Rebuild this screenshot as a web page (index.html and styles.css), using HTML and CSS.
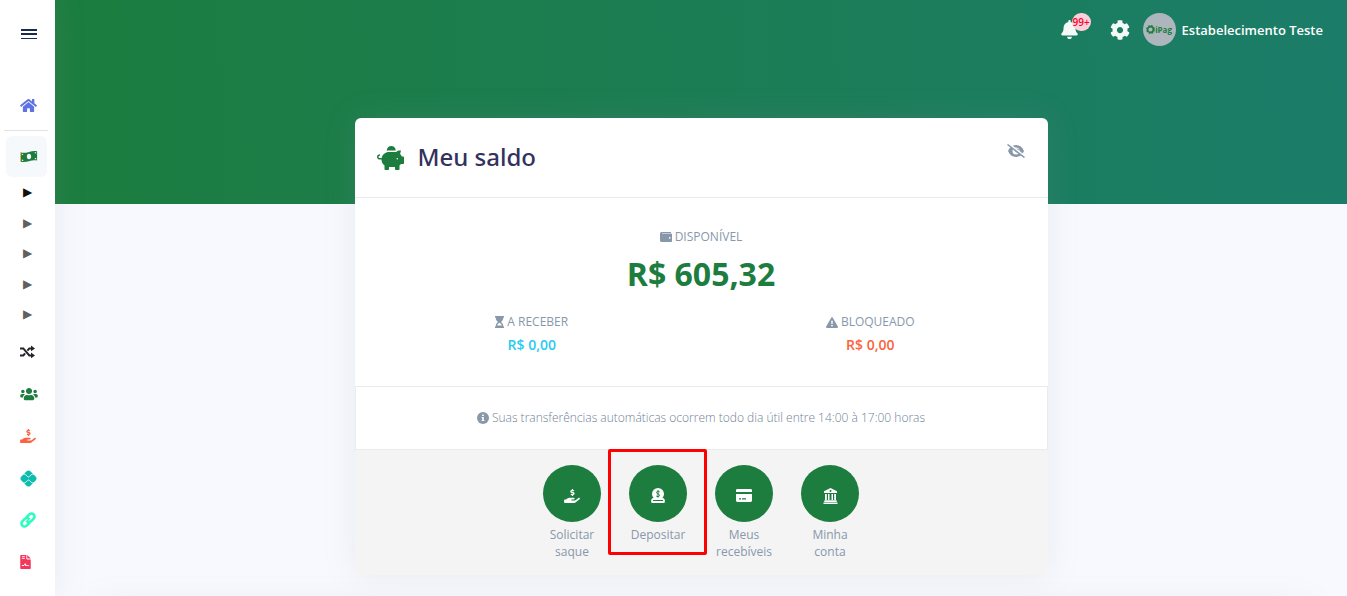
FILE: index.html
```html
<!DOCTYPE html>
<html lang="pt-BR">

<head>
    <meta charset="UTF-8">
    <meta name="viewport" content="width=device-width, initial-scale=1.0">
    <title>Meu saldo</title>
    <link rel="stylesheet" href="styles.css">
</head>

<body>
    <!-- Sidebar -->
    <aside class="sidebar">
        <button class="menu-toggle" type="button" aria-label="Menu">
            <span class="menu-line"></span>
            <span class="menu-line"></span>
            <span class="menu-line menu-line-thin"></span>
        </button>
        <nav class="side-nav">
            <a href="#" class="side-link text-indigo" aria-label="Início">
                <svg width="17" height="15" viewBox="0 0 576 512"><path d="M280.37 148.26L96 300.11V464a16 16 0 0 0 16 16l112.06-.29a16 16 0 0 0 15.92-16V368a16 16 0 0 1 16-16h64a16 16 0 0 1 16 16v95.64a16 16 0 0 0 16 16.05L464 480a16 16 0 0 0 16-16V300L295.67 148.26a12.19 12.19 0 0 0-15.3 0zM571.6 251.47L488 182.56V44.05a12 12 0 0 0-12-12h-56a12 12 0 0 0-12 12v72.61L318.47 43a48 48 0 0 0-61 0L4.34 251.47a12 12 0 0 0-1.6 16.9l25.5 31A12 12 0 0 0 45.15 301l235.22-193.74a12.19 12.19 0 0 1 15.3 0L530.9 301a12 12 0 0 0 16.9-1.6l25.5-31a12 12 0 0 0-1.7-16.93z"/></svg>
            </a>
            <hr class="side-divider">
            <a href="#" class="side-link side-link-active text-green" aria-label="Saldo">
                <svg width="18" height="13" viewBox="0 0 20 14"><path fill-rule="evenodd" d="M1 2.600C4 3.400 7 2.700 10 1.900S16 .6 19 1.300v10.200c-3-.8-6-.1-9 .7s-6 1.300-9 .6zM10 3.900c-1.500 0-2.400 1.400-2.400 3.100s.9 3.100 2.400 3.100 2.400-1.400 2.400-3.100S11.500 3.900 10 3.900zM2 4v1.500c.9 0 1.600-.6 1.700-1.300zm0 7.800c.6.2 1.200.2 1.800.1-.1-.8-.8-1.500-1.800-1.500zM18 2.300c-.6-.1-1.200-.2-1.800-.1.1.8.8 1.400 1.800 1.500zm0 6.200c-1 .1-1.700.8-1.700 1.600.6 0 1.100 0 1.700.1z"/><path fill="#f0a63c" d="M.2 2.400h.9v10.500H.2z"/></svg>
            </a>
            <div class="side-sub">
                <a href="#" class="side-arrow side-arrow-active">&#9654;</a>
                <a href="#" class="side-arrow">&#9654;</a>
                <a href="#" class="side-arrow">&#9654;</a>
                <a href="#" class="side-arrow">&#9654;</a>
                <a href="#" class="side-arrow">&#9654;</a>
            </div>
            <a href="#" class="side-link text-dark" aria-label="Transferências">
                <svg width="15" height="14" viewBox="0 0 15 14"><path d="M0 3.400h3.300l6 7h2.200M0 10.400h3.300l1.800-2.100M7.400 5.600l1.900-2.200h2.200" fill="none" stroke="currentColor" stroke-width="2"/><path d="M11 .6l4 2.800-4 2.800zM11 7.600l4 2.800-4 2.800z"/></svg>
            </a>
            <a href="#" class="side-link text-green" aria-label="Clientes">
                <svg width="18" height="14" viewBox="0 0 640 512"><path d="M96 224c35.300 0 64-28.700 64-64s-28.700-64-64-64-64 28.700-64 64 28.700 64 64 64zm448 0c35.300 0 64-28.700 64-64s-28.700-64-64-64-64 28.700-64 64 28.700 64 64 64zm32 32h-64c-17.600 0-33.500 7.100-45.100 18.600 40.300 22.100 68.900 62 75.100 109.400h66c17.700 0 32-14.300 32-32v-32c0-35.300-28.700-64-64-64zm-256 0c61.900 0 112-50.100 112-112S381.900 32 320 32 208 82.100 208 144s50.100 112 112 112zm76.800 32h-8.300c-20.800 10-43.900 16-68.500 16s-47.600-6-68.500-16h-8.300C179.600 288 128 339.600 128 403.200V432c0 26.500 21.500 48 48 48h288c26.500 0 48-21.500 48-48v-28.800c0-63.600-51.600-115.200-115.200-115.200zm-223.700-13.400C161.500 263.100 145.600 256 128 256H64c-35.300 0-64 28.700-64 64v32c0 17.700 14.300 32 32 32h65.900c6.300-47.400 34.900-87.300 75.200-109.400z"/></svg>
            </a>
            <a href="#" class="side-link text-orange" aria-label="Saques">
                <svg width="16" height="14" viewBox="0 0 576 512"><path id="hand-usd" d="M271.06,144.3l54.27,14.3a8.59,8.59,0,0,1,6.63,8.1c0,4.6-4.09,8.4-9.12,8.4h-35.6a30,30,0,0,1-11.19-2.2c-5.24-2.2-11.28-1.7-15.3,2l-19,17.5a11.68,11.68,0,0,0-2.25,2.66,11.42,11.42,0,0,0,3.88,15.74,83.77,83.77,0,0,0,34.51,11.5V240c0,8.8,7.83,16,17.37,16h17.37c9.55,0,17.38-7.2,17.38-16V222.4c32.93-3.6,57.84-31,53.5-63-3.15-23-22.46-41.3-46.56-47.7L282.68,97.4a8.59,8.59,0,0,1-6.63-8.1c0-4.6,4.09-8.4,9.12-8.4h35.6A30,30,0,0,1,332,83.1c5.23,2.2,11.28,1.7,15.3-2l19-17.5A11.31,11.31,0,0,0,368.47,61a11.43,11.43,0,0,0-3.84-15.78,83.82,83.82,0,0,0-34.52-11.5V16c0-8.8-7.82-16-17.37-16H295.37C285.82,0,278,7.2,278,16V33.6c-32.89,3.6-57.85,31-53.51,63C227.63,119.6,247,137.9,271.06,144.3ZM565.27,328.1c-11.8-10.7-30.2-10-42.6,0L430.27,402a63.64,63.64,0,0,1-40,14H272a16,16,0,0,1,0-32h78.29c15.9,0,30.71-10.9,33.25-26.6a31.2,31.2,0,0,0,.46-5.46A32,32,0,0,0,352,320H192a117.66,117.66,0,0,0-74.1,26.29L71.4,384H16A16,16,0,0,0,0,400v96a16,16,0,0,0,16,16H372.77a64,64,0,0,0,40-14L564,377a32,32,0,0,0,1.28-48.9Z"/></svg>
            </a>
            <a href="#" class="side-link text-teal" aria-label="Pix">
                <svg width="17" height="17" viewBox="0 0 16 16"><rect x="2" y="2" width="12" height="12" rx="2.500" transform="rotate(45 8 8)"/><path d="M2.500 3.800h1.300c.8 0 1.300.3 1.800.8l1.700 1.700c.4.400 1 .4 1.400 0l1.700-1.700c.5-.5 1-.8 1.800-.8h1.300M2.500 12.200h1.300c.8 0 1.300-.3 1.800-.8l1.700-1.700c.4-.4 1-.4 1.400 0l1.700 1.700c.5.5 1 .8 1.800.8h1.300" fill="none" stroke="#fff" stroke-width=".8"/></svg>
            </a>
            <a href="#" class="side-link text-mint" aria-label="Links">
                <svg width="16" height="16" viewBox="0 0 16 16"><g fill="none" stroke="currentColor" stroke-width="2.600" transform="rotate(-45 8 8)"><path d="M7.500 11H3a3 3 0 0 1 0-6h3.500a3 3 0 0 1 2.900 3.700"/><path d="M8.500 5H13a3 3 0 0 1 0 6H9.500a3 3 0 0 1-2.900-3.700"/></g></svg>
            </a>
            <a href="#" class="side-link text-red" aria-label="Contratos">
                <svg width="11" height="14" viewBox="0 0 384 512"><path fill-rule="evenodd" d="M0 24C0 10 10 0 24 0h200v136c0 13 11 24 24 24h136v328c0 14-10 24-24 24H24c-14 0-24-10-24-24zM60 50v34h110V50zm0 66v34h110v-34zM60 400h70l30-45 35 50h130v-34h-95l-50-75-50 70H60zM256 0l128 128H256z"/></svg>
            </a>
        </nav>
    </aside>
    <!-- End of Sidebar -->

    <main class="main">
        <header class="hero">
            <div class="topbar">
                <button class="icon-button" type="button" aria-label="Notificações">
                    <svg width="17" height="19" viewBox="0 0 448 512"><path d="M224 512c35.320 0 63.970-28.650 63.970-64H160.030c0 35.350 28.650 64 63.970 64zm215.390-149.710c-19.320-20.760-55.470-51.990-55.470-154.290 0-77.700-54.480-139.900-127.940-155.160V32c0-17.670-14.320-32-31.980-32s-31.980 14.330-31.980 32v20.840C118.560 68.100 64.080 130.300 64.080 208c0 102.300-36.150 133.530-55.470 154.290-6 6.450-8.660 14.160-8.610 21.710.110 16.400 12.980 32 32.100 32h383.800c19.120 0 32-15.600 32.100-32 .050-7.550-2.610-15.270-8.610-21.710z"/></svg>
                    <span class="badge">99+</span>
                </button>
                <button class="icon-button" type="button" aria-label="Configurações">
                    <svg width="20" height="20" viewBox="0 0 512 512"><path d="M487.400 315.700l-42.600-24.600c4.300-23.200 4.300-47 0-70.200l42.600-24.600c4.900-2.800 7.100-8.600 5.500-14-11.100-35.600-30-67.800-54.700-94.600-3.800-4.100-10-5.100-14.800-2.300L380.800 110c-17.900-15.400-38.500-27.300-60.800-35.100V25.800c0-5.600-3.900-10.500-9.400-11.700-36.700-8.200-74.300-7.800-109.200 0-5.500 1.200-9.400 6.100-9.400 11.700V75c-22.200 7.900-42.800 19.800-60.800 35.100L88.700 85.500c-4.900-2.800-11-1.900-14.800 2.300-24.700 26.700-43.600 58.900-54.700 94.600-1.700 5.400.6 11.200 5.500 14L67.300 221c-4.300 23.200-4.300 47 0 70.200l-42.600 24.600c-4.900 2.800-7.100 8.600-5.500 14 11.100 35.600 30 67.800 54.700 94.600 3.800 4.100 10 5.100 14.800 2.300l42.600-24.600c17.900 15.400 38.500 27.300 60.800 35.100v49.200c0 5.600 3.900 10.500 9.400 11.700 36.700 8.200 74.300 7.800 109.200 0 5.500-1.200 9.400-6.100 9.400-11.700v-49.200c22.200-7.900 42.800-19.800 60.800-35.100l42.600 24.600c4.900 2.800 11 1.900 14.800-2.300 24.700-26.700 43.600-58.900 54.700-94.600 1.500-5.500-.7-11.300-5.600-14.100zM256 336c-44.100 0-80-35.900-80-80s35.900-80 80-80 80 35.900 80 80-35.900 80-80 80z"/></svg>
                </button>
                <a href="#" class="profile">
                    <span class="avatar">
                        <svg width="9" height="9" viewBox="0 0 10 10"><circle cx="5" cy="5" r="3.200" fill="none" stroke="currentColor" stroke-width="1.800"/><circle cx="5" cy="5" r="4.200" fill="none" stroke="currentColor" stroke-width="1.400" stroke-dasharray="2 1.300"/></svg>
                        iPag
                    </span>
                    <span class="profile-name">Estabelecimento Teste</span>
                </a>
            </div>
        </header>

        <!-- Balance card -->
        <section class="card">
            <div class="card-header">
                <svg class="text-green" width="27" height="24" viewBox="0 0 576 512"><path d="M560 224h-29.500c-8.800-20-21.600-37.700-37.400-52.500L512 96h-32c-29.400 0-55.400 13.500-73 34.300-7.600-1.100-15.100-2.300-23-2.300H256c-77.400 0-141.900 55-156.800 128H56c-14.800 0-26.500-13.500-23.500-28.800C34.700 215.800 45.400 208 57 208h1c3.300 0 6-2.700 6-6v-20c0-3.300-2.700-6-6-6-28.500 0-53.900 20.400-57.500 48.600C-3.900 258.800 22.700 288 56 288h40c0 52.200 25.400 98.100 64 127.300V496c0 8.800 7.200 16 16 16h64c8.800 0 16-7.200 16-16v-48h128v48c0 8.800 7.200 16 16 16h64c8.800 0 16-7.200 16-16v-80.700c11.800-8.900 22.300-19.400 31.300-31.300H560c8.800 0 16-7.200 16-16V240c0-8.800-7.200-16-16-16zm-128 64c-8.800 0-16-7.200-16-16s7.200-16 16-16 16 7.200 16 16-7.200 16-16 16zM256 96h128c5.400 0 10.700.4 15.900.8 0-.3.1-.5.1-.8 0-53-43-96-96-96s-96 43-96 96c0 2.100.5 4.100.6 6.200 15.200-3.900 31-6.200 47.400-6.200z"/></svg>
                <h1 class="card-title">Meu saldo</h1>
                <button class="eye-button" type="button" aria-label="Ocultar saldo">
                    <svg width="18" height="14" viewBox="0 0 18 14"><path fill-rule="evenodd" d="M9 1c3.700 0 6.500 2.200 8 6-1.500 3.800-4.300 6-8 6s-6.500-2.200-8-6c1.500-3.800 4.300-6 8-6zm0 2.500a3.500 3.500 0 1 0 0 7 3.500 3.500 0 0 0 0-7z"/><circle cx="10" cy="6.500" r="2"/><path d="M1.500 0l16 12.500" stroke="#fff" stroke-width="2.500"/><path d="M.5.500l17 13" stroke="currentColor" stroke-width="1.500"/></svg>
                </button>
            </div>

            <div class="card-body">
                <div class="balance">
                    <div class="label">
                        <svg width="12" height="12" viewBox="0 0 12 12"><path fill-rule="evenodd" d="M1.500 1H11v1H2v.5h9.200c.5 0 .8.4.8.8v6.900c0 .5-.4.800-.8.800H1.500A1.500 1.500 0 0 1 0 9.500v-7A1.500 1.500 0 0 1 1.500 1zM9.700 5.900a.9.900 0 1 0 0 1.800.9.900 0 0 0 0-1.800z"/></svg>
                        DISPONÍVEL
                    </div>
                    <div class="amount amount-large">R$ 605,32</div>
                </div>
                <div class="balance-row">
                    <div class="balance">
                        <div class="label">
                            <svg width="9" height="12" viewBox="0 0 9 12"><path fill-rule="evenodd" d="M0 0h9v1.500h-.7c0 2-1 3.600-2.400 4.500 1.400.9 2.400 2.500 2.400 4.500H9V12H0v-1.500h.7C.7 8.500 1.700 6.900 3.100 6 1.700 5.100.7 3.500.7 1.500H0zm2.200 9.500h4.600C6.400 8 5.500 7.100 4.500 7.100S2.600 8 2.200 9.500z"/></svg>
                            A RECEBER
                        </div>
                        <div class="amount text-cyan">R$ 0,00</div>
                    </div>
                    <div class="balance">
                        <div class="label">
                            <svg width="12" height="11" viewBox="0 0 12 11"><path fill-rule="evenodd" d="M6 .3c.3 0 .6.100.8.500l5 8.700c.4.700-.1 1.500-.9 1.500H1.100c-.8 0-1.300-.8-.9-1.500l5-8.700C5.400.4 5.700.3 6 .3zM5.200 3.800l.2 3.200h1.200l.2-3.200zM6 7.700a.9.900 0 1 0 0 1.800.9.900 0 0 0 0-1.800z"/></svg>
                            BLOQUEADO
                        </div>
                        <div class="amount text-orange">R$ 0,00</div>
                    </div>
                </div>
            </div>

            <div class="card-notice">
                <svg width="12" height="12" viewBox="0 0 12 12"><circle cx="6" cy="6" r="6"/><path fill="#fff" d="M5.100 2.400h1.700v1.500H5.100zM4.600 4.900h2.200v3.200h.6v1H4.600v-1h.6V5.900h-.6z"/></svg>
                <span class="notice-text">Suas transferências automáticas ocorrem todo dia útil entre 14:00 à 17:00 horas</span>
            </div>

            <div class="card-footer">
                <a href="#" class="action">
                    <span class="action-circle">
                        <svg width="16" height="14" viewBox="0 0 576 512"><use href="#hand-usd"/></svg>
                    </span>
                    Solicitar saque
                </a>
                <a href="#" class="action action-highlight">
                    <span class="action-circle">
                        <svg width="14" height="15" viewBox="0 0 14 15"><circle cx="7" cy="6" r="6"/><path d="M1.700 10h10.600l1.500 1.800V14a1 1 0 0 1-1 1H1.200a1 1 0 0 1-1-1v-2.200z"/><path d="M2 12.500h10" stroke="#1c7d3f" stroke-width="1"/><path d="M8.700 3.900C8.200 3.500 7.600 3.300 7 3.300c-2 0-2 2.300 0 2.600s2.200 2.700 0 2.700c-.7 0-1.300-.2-1.800-.6M7 2.200v7.400" fill="none" stroke="#1c7d3f" stroke-width="1"/></svg>
                    </span>
                    Depositar
                </a>
                <a href="#" class="action">
                    <span class="action-circle">
                        <svg width="16" height="13" viewBox="0 0 16 13"><path fill-rule="evenodd" d="M0 3V1.400C0 .6.600 0 1.400 0h13.200c.8 0 1.400.6 1.400 1.400V3zM0 5h16v6.600c0 .8-.6 1.400-1.400 1.400H1.400C.6 13 0 12.400 0 11.600zm3 4.200v1.200h2V9.200zm3 0v1.200h4V9.200z"/></svg>
                    </span>
                    Meus recebíveis
                </a>
                <a href="#" class="action">
                    <span class="action-circle">
                        <svg width="15" height="16" viewBox="0 0 15 16"><path fill-rule="evenodd" d="M7.500 0L14 3.200V5H1V3.200zM7.500 2a1 1 0 1 0 0 2 1 1 0 0 0 0-2zM2 6h1.800v6.500H2zM5 6h1.500v6.500H5zM8.500 6H10v6.500H8.500zM11.200 6H13v6.500h-1.800zM1.300 12.300h12.400V14H1.300zM.5 14.500h14V16H.5z"/></svg>
                    </span>
                    Minha conta
                </a>
            </div>
        </section>
        <!-- End of Balance card -->

        <section class="panel"></section>
    </main>
</body>

</html>
```
FILE: styles.css
```css
* {
    box-sizing: border-box;
}

body {
    margin: 0;
    display: flex;
    height: 100vh;
    overflow: hidden;
    background-color: #f8f9fe;
    color: #8898aa;
    font-family: 'Open Sans', sans-serif;
    font-size: 12px;
    line-height: 18px;
}

a {
    color: inherit;
    text-decoration: none;
}

button {
    padding: 0;
    border: 0;
    background: none;
    color: inherit;
    font: inherit;
    cursor: pointer;
}

svg {
    display: block;
    flex: none;
    fill: currentColor;
}

.text-indigo {
    color: #5e72e4;
}

.text-green {
    color: #1c7d3f;
}

.text-dark {
    color: #212529;
}

.text-orange {
    color: #fb6340;
}

.text-teal {
    color: #0cbcaf;
}

.text-mint {
    color: #2dfbc0;
}

.text-red {
    color: #f5365c;
}

.text-cyan {
    color: #2bcbf0;
}

/* Sidebar */
.sidebar {
    flex: none;
    width: 55px;
    padding: 0 4px;
    background-color: #fff;
    box-shadow: 0 0 32px rgba(136, 152, 170, .15);
    z-index: 1;
}

.menu-toggle {
    display: flex;
    flex-direction: column;
    gap: 2px;
    margin: 28px auto 45px;
    padding: 1px 0 0 2px;
}

.menu-line {
    width: 16px;
    height: 2px;
    background-color: #172b4d;
}

.menu-line-thin {
    height: 1px;
    margin-top: 1px;
}

.side-nav {
    display: flex;
    flex-direction: column;
}

.side-link {
    display: flex;
    align-items: center;
    height: 42px;
    padding-left: 16px;
}

.side-link-active {
    width: 41px;
    height: 41px;
    margin: 0 2px;
    padding-left: 14px;
    border-radius: 6px;
    background-color: #f6f9fc;
}

.side-divider {
    width: 44px;
    height: 1px;
    margin: 4px 0 5px;
    border: 0;
    background-color: #e3e3e3;
}

.side-sub {
    display: flex;
    flex-direction: column;
    justify-content: space-between;
    height: 152px;
    margin-bottom: 2px;
}

.side-arrow {
    height: 30px;
    color: #606060;
    font-family: 'DejaVu Sans', sans-serif;
    font-size: 12px;
    line-height: 30px;
    text-align: center;
}

.side-arrow-active {
    color: #111;
}

/* Main area */
.main {
    flex: 1;
    min-width: 0;
    overflow: hidden;
}

.hero {
    height: 204px;
    background: linear-gradient(87deg, #1c7d3f 0%, #1b7d69 100%);
}

.topbar {
    display: flex;
    align-items: center;
    justify-content: flex-end;
    padding: 13px 24px 0;
}

.icon-button {
    position: relative;
    margin-right: 24px;
    color: #f4faf8;
}

.icon-button + .icon-button {
    margin: 0 13px 0 8px;
}

.badge {
    position: absolute;
    top: -7px;
    left: 11px;
    width: 19px;
    height: 18px;
    border-radius: 9px;
    background-color: #fdd1da;
    color: #f80031;
    font-size: 10px;
    font-weight: 600;
    line-height: 18px;
    text-align: center;
}

.profile {
    display: flex;
    align-items: center;
    gap: 6px;
    color: #fff;
}

.avatar {
    display: flex;
    align-items: center;
    justify-content: center;
    width: 33px;
    height: 33px;
    border-radius: 50%;
    background-color: #adb5bd;
    color: #1c7d3f;
    font-size: 8px;
    font-weight: 700;
}

.profile-name {
    font-size: 13px;
    font-weight: 600;
}

/* Balance card */
.card {
    position: relative;
    max-width: 693px;
    margin: -86px auto 0;
    border-radius: 6px;
    background-color: #fff;
    box-shadow: 0 0 32px rgba(136, 152, 170, .15);
}

.card-header {
    display: flex;
    align-items: center;
    gap: 14px;
    height: 80px;
    padding: 0 23px 0 22px;
    border-bottom: 1px solid #e9ecef;
}

.card-title {
    margin: 0 0 2px;
    color: #32325d;
    font-family: 'Noto Sans', sans-serif;
    font-size: 24px;
    font-weight: 500;
    line-height: 36px;
}

.eye-button {
    margin: 0 0 14px auto;
    color: #8898aa;
}

.card-body {
    padding: 30px 8px 32px;
}

.balance {
    flex: 1;
    text-align: center;
}

.label {
    display: flex;
    align-items: center;
    justify-content: center;
    gap: 3px;
}

.balance-row {
    display: flex;
    margin-top: 18px;
}

.amount {
    margin-top: 5px;
    font-size: 14px;
    font-weight: 600;
}

.amount-large {
    margin-top: 7px;
    color: #1c7d3f;
    font-size: 32px;
    font-weight: 700;
    line-height: 42px;
}

.card-notice {
    display: flex;
    align-items: center;
    justify-content: center;
    gap: 3px;
    min-height: 64px;
    border: 1px solid #e9ecef;
}

.notice-text {
    color: #708196;
    font-weight: 300;
}

.card-footer {
    display: flex;
    justify-content: center;
    padding: 15px 20px;
    border-radius: 0 0 6px 6px;
    background-color: #f4f4f4;
}

.action {
    position: relative;
    display: flex;
    flex-direction: column;
    align-items: center;
    width: 86px;
    padding: 0 14px;
    line-height: 17px;
    text-align: center;
}

.action-circle {
    display: flex;
    align-items: center;
    justify-content: center;
    width: 58px;
    height: 57px;
    margin-bottom: 4px;
    padding-top: 4px;
    border-radius: 50%;
    background-color: #1c7d3f;
    color: #fff;
}

.action-highlight::after {
    content: "";
    position: absolute;
    box-sizing: border-box;
    top: -16px;
    left: -7px;
    right: -6px;
    height: 106px;
    border: 3px solid #f00;
    border-radius: 2px;
}

.panel {
    height: 200px;
    margin: 30px 39px 0;
    border-radius: 6px;
    background-color: #fff;
    box-shadow: 0 0 32px rgba(136, 152, 170, .15);
}
```
